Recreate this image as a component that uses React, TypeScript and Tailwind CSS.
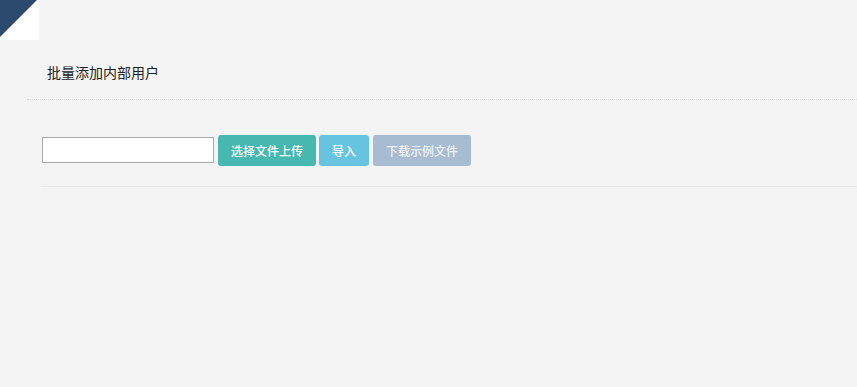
import React from "react";

export default function App() {
  return (
    <div
      className="w-[857px] h-[387px] bg-[#f4f4f4] overflow-hidden"
      style={{ fontFamily: '"Microsoft YaHei", "Noto Sans CJK SC", sans-serif' }}
    >
      <div className="w-[39px] h-[40px] bg-white">
        <svg width="39" height="40" viewBox="0 0 39 40">
          <polygon points="0,0 37,0 0,37" fill="#2c4a6e" />
        </svg>
      </div>
      <div className="ml-[27px] border-b border-dotted border-[#dcdcdc] h-[60px] pl-[20px] pt-[19px]">
        <span className="text-[14px] leading-[20px] text-[#222]">批量添加内部用户</span>
      </div>
      <div className="ml-[41px] pt-[35px] pb-[20px] border-b border-[#ebebeb]">
        <div className="flex items-start h-[31px]">
          <input
            type="text"
            className="ml-[1px] mt-[2px] w-[172px] h-[26px] bg-white border border-[#a9a9a9] outline-none"
          />
          <button className="ml-[4px] w-[98px] h-[31px] rounded-[3px] bg-[#46b8af] text-white text-[12px] font-medium">
            选择文件上传
          </button>
          <button className="ml-[3px] w-[50px] h-[31px] rounded-[3px] bg-[#67c4e1] text-white text-[12px] font-medium">
            导入
          </button>
          <button className="ml-[4px] w-[98px] h-[31px] rounded-[3px] bg-[#a7bcd1] text-[#eef2f6] text-[12px] font-medium">
            下载示例文件
          </button>
        </div>
      </div>
    </div>
  );
}
